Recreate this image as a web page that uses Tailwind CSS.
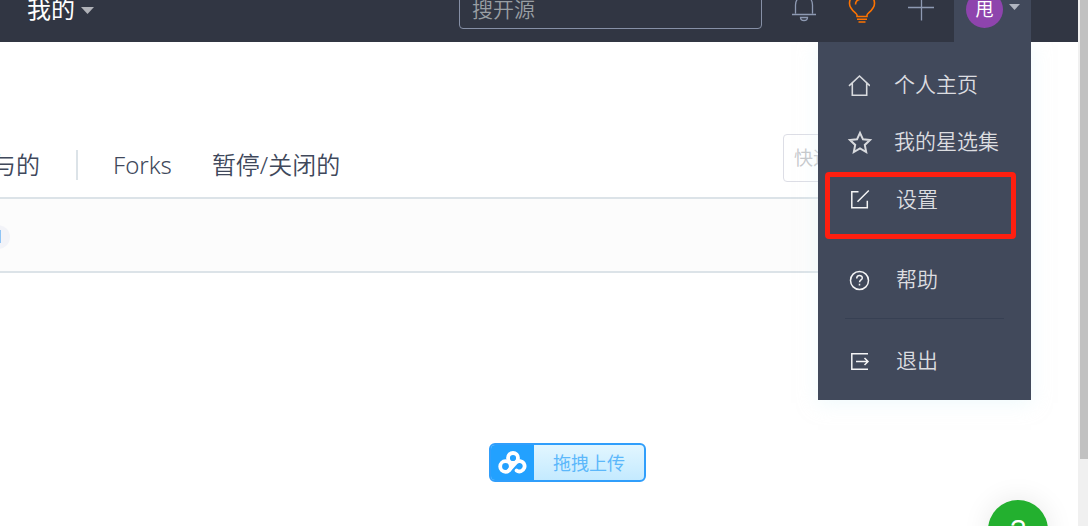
<!DOCTYPE html>
<html lang="zh-CN">
<head>
<meta charset="utf-8">
<meta name="viewport" content="width=device-width, initial-scale=1">
<title>我的</title>
<script src="https://cdn.jsdelivr.net/npm/@tailwindcss/browser@4"></script>
</head>
<body class="flex h-screen overflow-hidden bg-white font-['Open_Sans','Noto_Sans_CJK_SC',sans-serif] text-[#40485b]">
<div class="relative min-w-0 flex-1 overflow-hidden">

  <header class="relative z-10 flex h-[42px] items-end overflow-hidden bg-[#313643]">
    <div class="flex h-[66px] w-full shrink-0 items-center pr-[47px]">
      <button type="button" class="ml-[27px] flex items-center gap-[6px] text-2xl text-white">我的
        <svg class="mt-[2px] h-[7px] w-[13px] fill-[#b0b2b8]" viewBox="0 0 13 7"><path d="M0 0h13L6.500 7z"/></svg>
      </button>
      <input type="search" aria-label="搜开源" placeholder="搜开源" class="mr-[13px] ml-auto h-10 w-[303px] rounded border border-[#8690a6] bg-transparent px-3 text-[21px] font-[350] text-white placeholder:text-[#999ea3]">
      <button type="button" aria-label="通知" class="flex w-[58px] justify-center">
        <svg class="h-[28px] w-[26px]" viewBox="0 0 26 28" fill="none" stroke="#8e9ab3" stroke-width="1.300"><path d="M4.500 18.500V10C4.500 4.500 8 1.500 13 1.500S21.500 4.500 21.500 10v8.500M1 19.500h24M9.500 22.500h7c0 4-7 4-7 0z"/></svg>
      </button>
      <button type="button" aria-label="动态" class="flex w-[58px] justify-center">
        <svg class="h-[28px] w-[28px]" viewBox="0 0 28 28" fill="none" stroke="#fe7300" stroke-width="1.600"><path d="M9 21.500v-1.500c0-2-7.500-5-7.500-11.500C1.500 2 7 -3 14 -3S26.500 2 26.500 8.500C26.500 15 19 18 19 20v1.500zM9 24.200h10M10.500 27h7M7.500 9.500c0-3 1.500-4.500 4-5"/></svg>
      </button>
      <button type="button" aria-label="新建" class="flex w-[58px] justify-center">
        <svg class="h-[26px] w-[28px]" viewBox="0 0 28 26" stroke="#8e9ab3" stroke-width="1.300"><path d="M2 11.500h26M15.500 0v24.500"/></svg>
      </button>
      <button type="button" aria-label="个人菜单" aria-expanded="true" class="ml-[5px] flex h-full w-[77px] items-center gap-[6px] bg-[#41495b] pl-3">
        <span class="flex size-[37px] items-center justify-center rounded-full bg-[#8e44ad] text-lg text-white">甩</span>
        <svg class="mb-1 h-[6px] w-[11px] fill-[#b0b5c0]" viewBox="0 0 11 6"><path d="M0 0h11L5.500 6z"/></svg>
      </button>
    </div>
  </header>

  <main class="pt-[90px] pr-[47px]">
    <div class="flex h-[67px] items-center justify-between border-b-2 border-[#dce3e8] text-2xl font-[350]">
      <nav class="-ml-8 flex items-center whitespace-nowrap font-['Noto_Sans','Noto_Sans_CJK_SC',sans-serif]">
        <a href="#">参与的</a>
        <span class="mr-[35px] ml-9 h-[30px] w-[2px] bg-[#dce3e8]"></span>
        <a href="#" class="mr-10">Forks</a>
        <a href="#">暂停/关闭的</a>
      </nav>
      <input type="search" aria-label="快速搜索" placeholder="快速搜索" class="mb-[14px] h-12 w-[248px] rounded border border-[#dddee6] px-[10px] text-[19px] placeholder:text-[#c5c7cb]">
    </div>
    <div class="flex h-[74px] items-center border-b-2 border-[#dce3e8] bg-[#fcfcfc] pt-[3px]">
      <span class="-ml-6 flex h-6 w-[34px] items-center justify-end overflow-hidden rounded-full bg-[#f2f3f8] pr-[9px]"><span class="h-[13px] w-px bg-[#8fc4f5]"></span></span>
    </div>
  </main>

  <nav aria-label="个人菜单" class="absolute top-[42px] right-[47px] w-[213px] bg-[#41495b] pt-[14px] pb-[10px] text-[21px] font-[350] text-[#dcdde0] shadow-[0_3px_18px_#e0f5fa80]">
    <a href="#" class="flex h-[57px] items-center gap-6 pl-[30px]">
      <svg class="size-[22px]" viewBox="0 0 22 22" fill="none" stroke="#d8dade" stroke-width="1.600"><path d="M1 11.800 11.500 2 22 11.800M4.300 9v12.200h14.400V9"/></svg>
      个人主页</a>
    <a href="#" class="flex h-[58px] items-center gap-6 pl-[30px]">
      <svg class="size-[22px] overflow-visible" viewBox="0 0 22 22" fill="none" stroke="#d8dade" stroke-width="2"><path d="m12 1.800 3 6.500 7 .8-5.200 4.800 1.400 7.100-6.200-3.500L5.800 21l1.400-7.100L2 9.100l7-.8z"/></svg>
      我的星选集</a>
    <a href="#" class="flex h-[58px] items-center gap-[26px] pl-[30px]">
      <svg class="size-[22px]" viewBox="0 0 22 22" fill="none" stroke="#f4f4f5" stroke-width="1.500"><path d="M10.500 2.800H3.800v16h15.500v-7M9.500 12.700 20.800 1.500"/></svg>
      设置</a>
    <a href="#" class="mt-[22px] flex h-[58px] items-center gap-[26px] pl-[30px]">
      <svg class="size-[22px]" viewBox="0 0 22 22" fill="none" stroke="#f4f4f5" stroke-width="1.500"><circle cx="11.500" cy="11.500" r="9"/><path d="M8.700 9.500c0-4 5.600-3.800 5.600-.6 0 2-2.800 2-2.800 4.300M11.500 14.800v1.700"/></svg>
      帮助</a>
    <hr class="mx-[27px] mt-[9px] mb-[13px] border-[#374053]">
    <a href="#" class="flex h-[58px] items-center gap-[26px] pl-[30px]">
      <svg class="size-[22px]" viewBox="0 0 22 22" fill="none" stroke="#f4f4f5" stroke-width="1.500"><path d="M20 3.800H3.800v15.500H20M8 11.500h12M16.500 8l3.500 3.500-3.500 3.500"/></svg>
      退出</a>
    <div class="pointer-events-none absolute top-[130px] left-[7px] h-[67px] w-[191px] rounded border-[5px] border-[#ff1f10]"></div>
  </nav>

  <button type="button" class="absolute top-[443px] left-[489px] flex h-[39px] w-[157px] overflow-hidden rounded-md border-2 border-[#309efb] bg-linear-to-b from-[#e2f6ff] to-[#c4eaff] text-lg text-[#5cb8fb]">
    <span class="flex h-full w-[43px] items-center justify-center bg-[#22a1ff]">
      <svg class="h-[24px] w-[30px]" viewBox="0 0 30 24" fill="none" stroke="#fff" stroke-width="3.800" stroke-linecap="round"><circle cx="15" cy="7" r="5"/><circle cx="7.500" cy="15.500" r="5.300"/><path d="M18.500 11c2-1.500 5.500-1.200 7.200 1.200 2 3 .5 6.800-2.800 8-1.700.6-3.200.2-4.300-.7M11 19.300l7.500-8.300"/></svg>
    </span>
    <span class="flex h-full flex-1 items-center justify-center">拖拽上传</span>
  </button>

  <button type="button" aria-label="帮助与反馈" class="absolute right-[30px] -bottom-[34px] flex size-[60px] items-center justify-center rounded-full bg-[#23b02f] font-['Liberation_Sans',sans-serif] text-[28px] text-white shadow-[0_0_28px_#00000018]">?</button>
</div>

<div class="flex w-[10px] shrink-0 flex-col bg-[#f0f0f0] pl-[2px]" aria-hidden="true">
  <div class="h-[459px] bg-[#c1c1c1]"></div>
</div>
</body>
</html>
